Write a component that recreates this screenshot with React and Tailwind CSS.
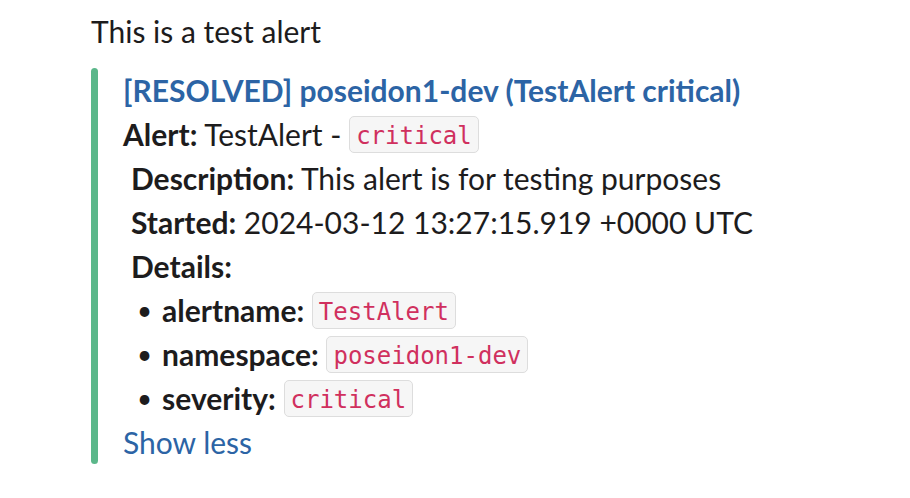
import React from 'react';

const Code = ({ children }) => (
  <code className="inline-flex h-[37px] items-center rounded-[5px] border-[1.5px] border-[#dddddd] bg-[#f6f6f6] px-[6px] pt-[4px] text-[24px] leading-none text-[#d0305e]" style={{ fontFamily: '"DejaVu Sans Mono", monospace' }}>
    {children}
  </code>
);

const details = [
  { key: 'alertname', value: 'TestAlert' },
  { key: 'namespace', value: 'poseidon1-dev' },
  { key: 'severity', value: 'critical' },
];

export default function App() {
  return (
    <div className="min-h-[498px] w-[910px] bg-white text-[#1d1c1d] text-[30px] leading-[44px]" style={{ fontFamily: 'Lato, "Noto Sans", sans-serif' }}>
      <div className="pl-[91px] pt-[9px]">
        <div>This is a test alert</div>
        <div className="mt-[15px] flex">
          <div className="w-[7px] rounded-full bg-[#5bb78a]" />
          <div className="pl-[25px]">
            <div className="font-bold text-[#2c64a5]">[RESOLVED] poseidon1-dev (TestAlert critical)</div>
            <div className="flex h-[44px] items-center"><b>Alert:</b>&nbsp;TestAlert -&nbsp;<Code>critical</Code></div>
            <div className="pl-[8px]">
              <div><b>Description:</b> This alert is for testing purposes</div>
              <div><b>Started:</b> 2024-03-12 13:27:15.919 +0000 UTC</div>
              <div><b>Details:</b></div>
              {details.map((d) => (
                <div key={d.key} className="flex h-[44px] items-center pl-[6px]">
                  <span className="mr-[10px] text-[26px]">•</span>
                  <b>{d.key}:</b>&nbsp;<Code>{d.value}</Code>
                </div>
              ))}
            </div>
            <div className="text-[#2c64a5]">Show less</div>
          </div>
        </div>
      </div>
    </div>
  );
}
